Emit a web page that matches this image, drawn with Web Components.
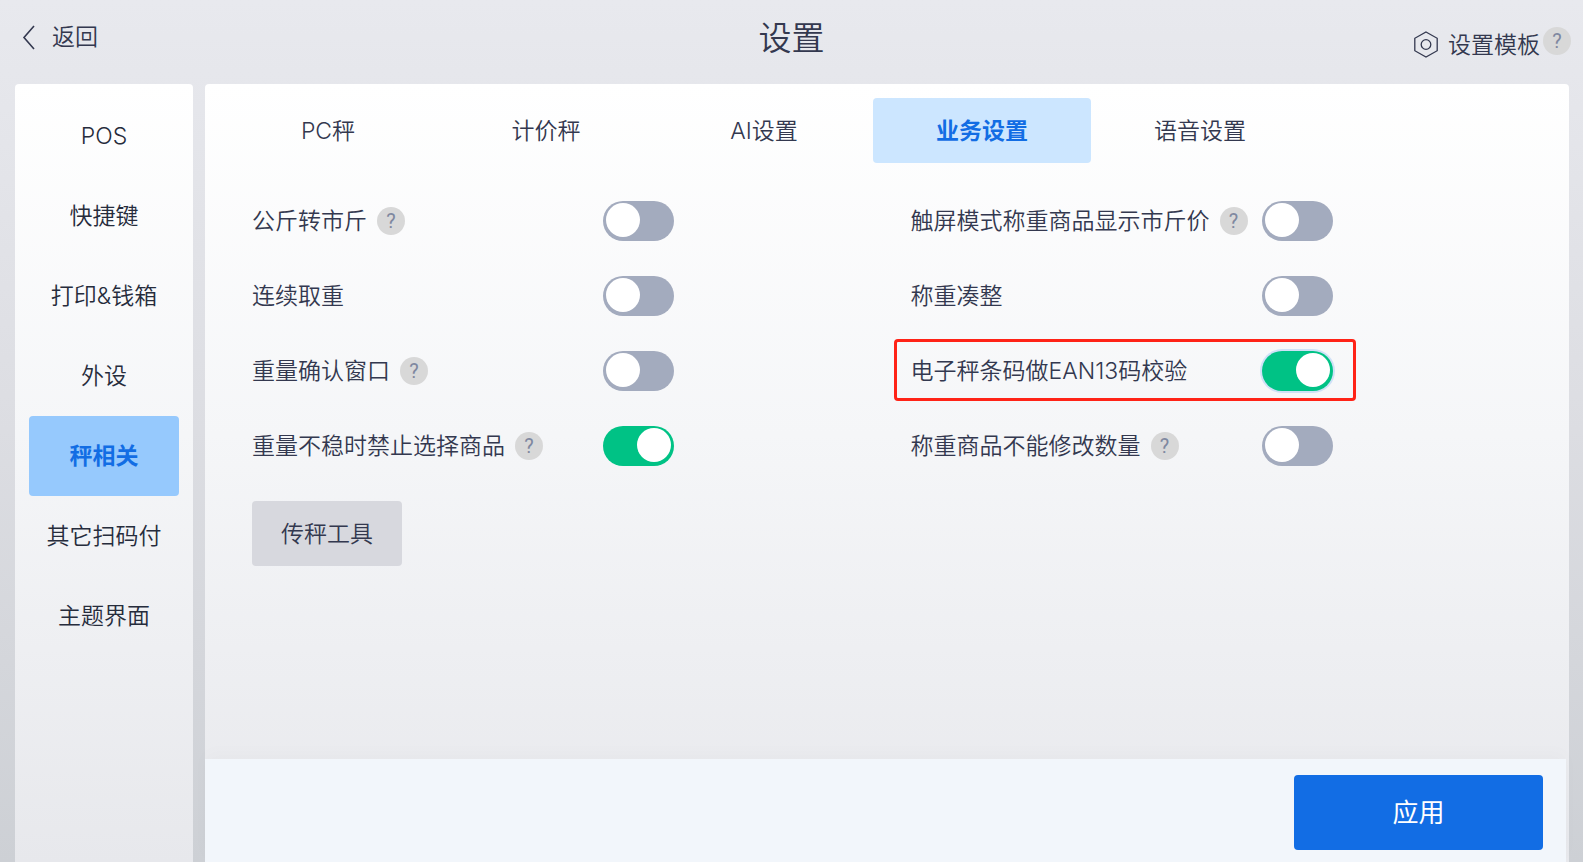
<!DOCTYPE html>
<html lang="zh-CN">
<head>
<meta charset="UTF-8">
<meta name="viewport" content="width=device-width, initial-scale=1.0">
<title>设置</title>
<style>
  body {
    margin: 0;
    font-family: Inter, "Noto Sans CJK SC", sans-serif;
    font-size: 23px;
    line-height: 32px;
    font-weight: 350;
    color: #33384f;
    --blue: #126de4;
  }
</style>
</head>
<body>
<settings-page>
  <page-header slot="header" heading="设置"></page-header>
  <side-menu slot="menu" items="POS,快捷键,打印&amp;钱箱,外设,秤相关,其它扫码付,主题界面" active="秤相关"></side-menu>
  <tab-bar slot="tabs" items="PC秤,计价秤,AI设置,业务设置,语音设置" active="业务设置"></tab-bar>
  <switch-row help>公斤转市斤</switch-row>
  <switch-row help>触屏模式称重商品显示市斤价</switch-row>
  <switch-row>连续取重</switch-row>
  <switch-row>称重凑整</switch-row>
  <switch-row help>重量确认窗口</switch-row>
  <switch-row checked marked>电子秤条码做EAN13码校验</switch-row>
  <switch-row help checked>重量不稳时禁止选择商品</switch-row>
  <switch-row help>称重商品不能修改数量</switch-row>
  <action-button slot="tools">传秤工具</action-button>
  <action-button slot="footer" primary>应用</action-button>
</settings-page>

<script>
class SettingsPage extends HTMLElement {
  connectedCallback() {
    this.attachShadow({ mode: 'open' });
    this.shadowRoot.innerHTML = `
      <style>
        :host {
          display: flex;
          flex-direction: column;
          min-height: 100vh;
          background: linear-gradient(#e8e9ee, #dcdde2 50%, #cdd0d5);
        }
        .body {
          flex: 1;
          display: flex;
          gap: 12px;
          padding: 0 14px 0 15px;
        }
        aside, main {
          background: linear-gradient(#fff, #f5f6f8 45%, #e7e8ec);
          border-radius: 4px 4px 0 0;
        }
        aside {
          flex: 0 0 178px;
        }
        main {
          flex: 1;
          min-width: 0;
          display: flex;
          flex-direction: column;
        }
        .rows {
          display: grid;
          grid-template-columns: 1fr 1fr;
          grid-auto-rows: 75px;
          padding: 20px 0 0 47px;
        }
        .tools {
          padding: 18px 47px;
        }
        footer {
          display: flex;
          justify-content: flex-end;
          margin: auto 3px 0 0;
          padding: 16px 23px 12px;
          background: #f2f6fb;
          box-shadow: 0 -6px 16px rgba(0, 0, 0, 0.02);
        }
      </style>
      <slot name="header"></slot>
      <div class="body">
        <aside><slot name="menu"></slot></aside>
        <main>
          <slot name="tabs"></slot>
          <div class="rows"><slot></slot></div>
          <div class="tools"><slot name="tools"></slot></div>
          <footer><slot name="footer"></slot></footer>
        </main>
      </div>
    `;
  }
}

class PageHeader extends HTMLElement {
  connectedCallback() {
    this.attachShadow({ mode: 'open' });
    this.shadowRoot.innerHTML = `
      <style>
        :host {
          display: block;
        }
        header {
          display: grid;
          grid-template-columns: 1fr auto 1fr;
          height: 84px;
        }
        h1 {
          margin: 15px 0 0;
          font-size: 33px;
          line-height: 46px;
          font-weight: inherit;
        }
        button {
          display: flex;
          align-items: center;
          border: 0;
          padding: 0;
          background: none;
          color: inherit;
          font: inherit;
          cursor: pointer;
        }
        svg {
          fill: none;
          stroke: currentColor;
        }
        .back {
          justify-self: start;
          align-self: start;
          gap: 16px;
          margin: 21px 0 0 22px;
        }
        .template {
          justify-self: end;
          display: flex;
          align-items: start;
          gap: 3px;
          padding: 27px 12px 0 0;
        }
        .template button {
          gap: 9px;
          margin-top: 2px;
        }
      </style>
      <header>
        <button class="back">
          <svg width="14" height="26" viewBox="0 0 14 26" stroke-width="1.600"><path d="M12 2 2 13.500 12 25"/></svg>
          返回
        </button>
        <h1>${this.getAttribute('heading')}</h1>
        <div class="template">
          <button>
            <svg width="26" height="28" viewBox="0 0 26 28" stroke-width="1.300"><path d="M13 1 24.200 7.300V19.700L13 26 1.800 19.700V7.300Z"/><circle cx="13" cy="13.500" r="4.800"/></svg>
            设置模板
          </button>
          <help-tip></help-tip>
        </div>
      </header>
    `;
  }
}

class HelpTip extends HTMLElement {
  connectedCallback() {
    this.attachShadow({ mode: 'open' });
    this.shadowRoot.innerHTML = `
      <style>
        :host {
          display: block;
          flex: none;
        }
        button {
          display: block;
          width: 28px;
          height: 28px;
          border: 0;
          border-radius: 50%;
          padding: 0;
          background: #d8d8d8;
          color: #7f88a0;
          font: 20px/26px Roboto, sans-serif;
          cursor: pointer;
        }
      </style>
      <button>?</button>
    `;
  }
}

class SideMenu extends HTMLElement {
  connectedCallback() {
    const active = this.getAttribute('active');
    const items = this.getAttribute('items').split(',');
    this.attachShadow({ mode: 'open' });
    this.shadowRoot.innerHTML = `
      <style>
        :host {
          display: block;
        }
        nav {
          display: flex;
          flex-direction: column;
          padding: 12px 14px;
        }
        button {
          height: 80px;
          border: 0;
          border-radius: 4px;
          padding: 0;
          background: none;
          color: #262c3c;
          font: inherit;
          white-space: nowrap;
          cursor: pointer;
        }
        .active {
          background: #96c9fd;
          color: var(--blue);
          font-weight: bold;
        }
      </style>
      <nav>
        ${items.map(t => `<button class="${t === active ? 'active' : ''}">${t.replace('&', '&amp;')}</button>`).join('')}
      </nav>
    `;
  }
}

class TabBar extends HTMLElement {
  connectedCallback() {
    const active = this.getAttribute('active');
    const items = this.getAttribute('items').split(',');
    this.attachShadow({ mode: 'open' });
    this.shadowRoot.innerHTML = `
      <style>
        :host {
          display: block;
        }
        div {
          display: flex;
          margin: 14px 0 0 14px;
        }
        button {
          flex: 0 0 16.150%;
          height: 65px;
          border: 0;
          border-radius: 4px;
          padding: 0;
          background: none;
          color: inherit;
          font: inherit;
          cursor: pointer;
        }
        .active {
          background: #cce6ff;
          color: var(--blue);
          font-weight: bold;
        }
      </style>
      <div role="tablist">
        ${items.map(t => `<button role="tab" aria-selected="${t === active}" class="${t === active ? 'active' : ''}">${t}</button>`).join('')}
      </div>
    `;
  }
}

class SwitchRow extends HTMLElement {
  connectedCallback() {
    this.attachShadow({ mode: 'open' });
    this.shadowRoot.innerHTML = `
      <style>
        :host {
          display: flex;
          align-items: center;
        }
        .row {
          position: relative;
          display: flex;
          align-items: center;
          width: 422px;
          height: 40px;
        }
        label {
          margin-right: 10px;
          white-space: nowrap;
        }
        input {
          appearance: none;
          display: flex;
          flex: none;
          width: 71px;
          height: 40px;
          margin: 0 0 0 auto;
          border-radius: 20px;
          padding: 2px 3px 4px;
          box-sizing: border-box;
          background: #a3abbe;
          cursor: pointer;
        }
        input::before {
          content: "";
          width: 34px;
          height: 34px;
          border-radius: 50%;
          background: #fff;
        }
        input:checked {
          justify-content: flex-end;
          background: #00c285;
        }
        /* callout frame round the row */
        :host([marked]) .row::after {
          content: "";
          position: absolute;
          inset: -12px -23px -10px -17px;
          border: 3px solid #ff2317;
          border-radius: 4px;
          pointer-events: none;
        }
        :host([marked]) input {
          box-shadow: 0 0 0 2px #cfe1f7;
        }
      </style>
      <div class="row">
        <label for="switch"><slot></slot></label>
        ${this.hasAttribute('help') ? '<help-tip></help-tip>' : ''}
        <input id="switch" type="checkbox" role="switch" ${this.hasAttribute('checked') ? 'checked' : ''}>
      </div>
    `;
  }
}

class ActionButton extends HTMLElement {
  connectedCallback() {
    this.attachShadow({ mode: 'open' });
    this.shadowRoot.innerHTML = `
      <style>
        :host {
          display: inline-block;
          vertical-align: top;
        }
        button {
          display: block;
          min-width: 150px;
          height: 65px;
          border: 0;
          border-radius: 4px;
          background: #d7d8de;
          color: inherit;
          font: inherit;
          cursor: pointer;
        }
        :host([primary]) button {
          min-width: 249px;
          height: 75px;
          background: var(--blue);
          color: #fff;
          font-size: 26px;
          font-weight: 400;
        }
      </style>
      <button><slot></slot></button>
    `;
  }
}

customElements.define('settings-page', SettingsPage);
customElements.define('page-header', PageHeader);
customElements.define('help-tip', HelpTip);
customElements.define('side-menu', SideMenu);
customElements.define('tab-bar', TabBar);
customElements.define('switch-row', SwitchRow);
customElements.define('action-button', ActionButton);
</script>
</body>
</html>
